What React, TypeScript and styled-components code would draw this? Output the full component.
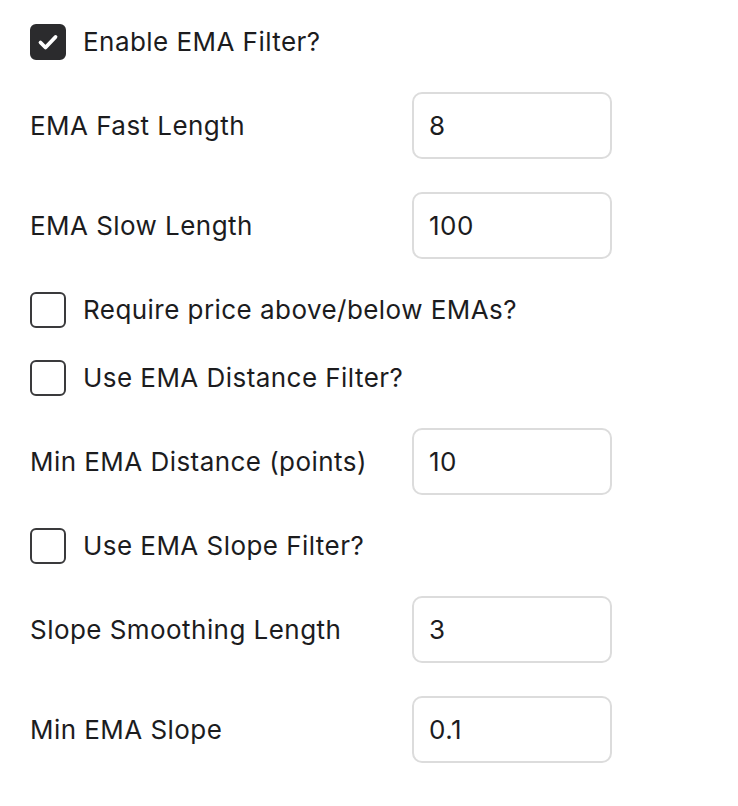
import React, { useState } from 'react'
import styled, { createGlobalStyle } from 'styled-components'

const GlobalStyle = createGlobalStyle`
  html, body {
    margin: 0;
    padding: 0;
    background: #ffffff;
  }
  body {
    font-family: Inter, "Noto Sans", "Liberation Sans", sans-serif;
    color: #1c1c1e;
    -webkit-font-smoothing: antialiased;
  }
`

const Panel = styled.div`
  display: flex;
  flex-direction: column;
  gap: 33px;
  padding: 24px 30px;
`

const CheckRow = styled.label`
  display: flex;
  align-items: center;
  gap: 17px;
  height: 35px;
  cursor: pointer;
`

const Box = styled.span<{ $checked: boolean }>`
  box-sizing: border-box;
  width: 36px;
  height: 36px;
  flex: none;
  display: flex;
  align-items: center;
  justify-content: center;
  border-radius: 6px;
  background: ${(p) => (p.$checked ? '#2b2b2d' : '#ffffff')};
  border: 2px solid ${(p) => (p.$checked ? '#2b2b2d' : '#3a3a3c')};
`

const HiddenInput = styled.input`
  display: none;
`

const FieldRow = styled.div`
  display: grid;
  grid-template-columns: 382px 200px;
  align-items: center;
`

const Label = styled.span`
  font-size: 26px;
  line-height: 30px;
  letter-spacing: 0.45px;
  color: #1c1c1e;
`

const NumberInput = styled.input`
  box-sizing: border-box;
  width: 200px;
  height: 67px;
  padding: 0 15px;
  border: 2px solid #dcdcdc;
  border-radius: 10px;
  background: #ffffff;
  font-family: inherit;
  font-size: 26px;
  letter-spacing: 0.45px;
  color: #1c1c1e;
  outline: none;
`

type CheckProps = {
  label: string
  checked: boolean
  onToggle: () => void
}

const Check: React.FC<CheckProps> = ({ label, checked, onToggle }) => (
  <CheckRow>
    <HiddenInput type="checkbox" checked={checked} onChange={onToggle} />
    <Box $checked={checked}>
      {checked && (
        <svg width="32" height="32" viewBox="0 0 32 32" fill="none">
          <path
            d="M8.5 16.5 L13.5 21.5 L23.5 11"
            stroke="#ffffff"
            strokeWidth="3.8"
            strokeLinecap="round"
            strokeLinejoin="round"
          />
        </svg>
      )}
    </Box>
    <Label>{label}</Label>
  </CheckRow>
)

type FieldProps = {
  label: string
  value: string
  onChange: (v: string) => void
}

const Field: React.FC<FieldProps> = ({ label, value, onChange }) => (
  <FieldRow>
    <Label>{label}</Label>
    <NumberInput value={value} onChange={(e) => onChange(e.target.value)} />
  </FieldRow>
)

const App: React.FC = () => {
  const [flags, setFlags] = useState({
    emaFilter: true,
    priceSide: false,
    distance: false,
    slope: false,
  })
  const [values, setValues] = useState({
    fast: '8',
    slow: '100',
    minDistance: '10',
    smoothing: '3',
    minSlope: '0.1',
  })

  const toggle = (key: keyof typeof flags) => () => setFlags((f) => ({ ...f, [key]: !f[key] }))
  const set = (key: keyof typeof values) => (v: string) => setValues((s) => ({ ...s, [key]: v }))

  return (
    <>
      <GlobalStyle />
      <Panel>
        <Check label="Enable EMA Filter?" checked={flags.emaFilter} onToggle={toggle('emaFilter')} />
        <Field label="EMA Fast Length" value={values.fast} onChange={set('fast')} />
        <Field label="EMA Slow Length" value={values.slow} onChange={set('slow')} />
        <Check label="Require price above/below EMAs?" checked={flags.priceSide} onToggle={toggle('priceSide')} />
        <Check label="Use EMA Distance Filter?" checked={flags.distance} onToggle={toggle('distance')} />
        <Field label="Min EMA Distance (points)" value={values.minDistance} onChange={set('minDistance')} />
        <Check label="Use EMA Slope Filter?" checked={flags.slope} onToggle={toggle('slope')} />
        <Field label="Slope Smoothing Length" value={values.smoothing} onChange={set('smoothing')} />
        <Field label="Min EMA Slope" value={values.minSlope} onChange={set('minSlope')} />
      </Panel>
    </>
  )
}

export default App
